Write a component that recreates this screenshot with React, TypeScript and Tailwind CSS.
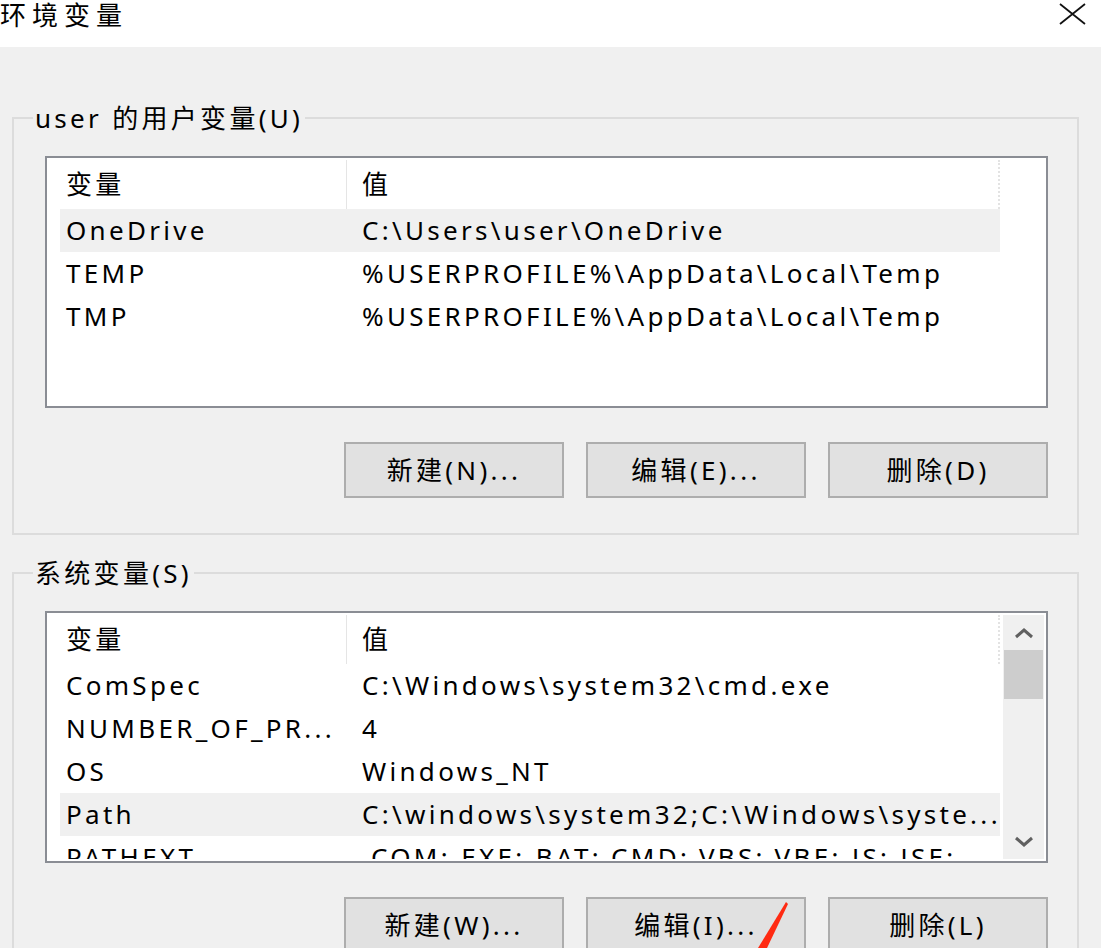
import React from "react";

type Row = { name: string; value: string; selected?: boolean };

const userRows: Row[] = [
  { name: "OneDrive", value: "C:\\Users\\user\\OneDrive", selected: true },
  { name: "TEMP", value: "%USERPROFILE%\\AppData\\Local\\Temp" },
  { name: "TMP", value: "%USERPROFILE%\\AppData\\Local\\Temp" },
];

const sysRows: Row[] = [
  { name: "ComSpec", value: "C:\\Windows\\system32\\cmd.exe" },
  { name: "NUMBER_OF_PR...", value: "4" },
  { name: "OS", value: "Windows_NT" },
  { name: "Path", value: "C:\\windows\\system32;C:\\Windows\\syste...", selected: true },
  { name: "PATHEXT", value: ".COM;.EXE;.BAT;.CMD;.VBS;.VBE;.JS;.JSE;" },
];

function ListBox({ rows, scroll }: { rows: Row[]; scroll?: boolean }) {
  return (
    <div className="w-[1003px] h-[252px] border-2 border-[#8a8d94] bg-white p-[2px] flex overflow-hidden">
      <div className="w-[951px] pl-[11px] flex flex-col overflow-hidden">
        <div className="h-[49px] flex shrink-0">
          <div className="w-[287px] h-full border-r border-[#e5e5e5] pl-[6px] flex items-center">变量</div>
          <div className="w-[653px] h-full border-r-2 border-dotted border-[#e3e3e3] pl-[15px] flex items-center">值</div>
        </div>
        {rows.map((r) => (
          <div
            key={r.name}
            className={`h-[43px] w-[940px] flex items-center shrink-0 ${r.selected ? "bg-[#f0f0f0]" : ""}`}
          >
            <div className="w-[287px] pl-[6px] whitespace-nowrap overflow-hidden">{r.name}</div>
            <div className="w-[653px] pl-[15px] whitespace-nowrap overflow-hidden">{r.value}</div>
          </div>
        ))}
      </div>
      {scroll && (
        <div className="ml-auto w-[41px] h-full bg-[#f0f0f0] flex flex-col items-center">
          <div className="h-[35px] w-full flex items-center justify-center">
            <svg width="20" height="12" viewBox="0 0 20 12">
              <path d="M2 10 L10 3 L18 10" fill="none" stroke="#606060" strokeWidth="3" />
            </svg>
          </div>
          <div className="w-[39px] h-[49px] bg-[#cdcdcd]" />
          <div className="flex-1" />
          <div className="h-[35px] w-full flex items-center justify-center">
            <svg width="20" height="12" viewBox="0 0 20 12">
              <path d="M2 2 L10 9 L18 2" fill="none" stroke="#606060" strokeWidth="3" />
            </svg>
          </div>
        </div>
      )}
    </div>
  );
}

function Btn({ label }: { label: string }) {
  return (
    <div className="w-[220px] h-[56px] border-2 border-[#adadad] bg-[#e1e1e1] flex items-center justify-center whitespace-nowrap">
      {label}
    </div>
  );
}

function Group({
  legend,
  rows,
  scroll,
  buttons,
  className,
}: {
  legend: string;
  rows: Row[];
  scroll?: boolean;
  buttons: string[];
  className: string;
}) {
  return (
    <fieldset className={`ml-[12px] w-[1067px] border-2 border-[#dcdcdc] p-0 m-0 ${className}`}>
      <legend className="ml-[19px] px-[2px] leading-[30px]">{legend}</legend>
      <div className="pl-[31px] pt-[23px] pb-[35px]">
        <ListBox rows={rows} scroll={scroll} />
        <div className="mt-[34px] w-[1003px] flex justify-end gap-[22px]">
          {buttons.map((b) => (
            <Btn key={b} label={b} />
          ))}
        </div>
      </div>
    </fieldset>
  );
}

export default function App() {
  return (
    <div
      className="relative w-[1101px] h-[948px] overflow-hidden bg-[#f0f0f0] text-black text-[26px] tracking-[3.3px]"
      style={{ fontFamily: '"Noto Sans", "Noto Sans CJK SC", sans-serif' }}
    >
      <div className="h-[47px] bg-white flex items-start justify-between">
        <div className="leading-[30px] tracking-[6px] whitespace-nowrap">环境变量</div>
        <svg className="mt-[3px] mr-[15px]" width="27" height="22" viewBox="0 0 27 22">
          <path d="M1 1 L26 21 M26 1 L1 21" stroke="#111" strokeWidth="1.8" fill="none" />
        </svg>
      </div>

      <Group
        className="mt-[56px]"
        legend="user 的用户变量(U)"
        rows={userRows}
        buttons={["新建(N)...", "编辑(E)...", "删除(D)"]}
      />
      <Group
        className="mt-[23px]"
        legend="系统变量(S)"
        rows={sysRows}
        scroll
        buttons={["新建(W)...", "编辑(I)...", "删除(L)"]}
      />

      <svg className="absolute left-0 top-0 pointer-events-none" width="1101" height="948" viewBox="0 0 1101 948">
        <polygon points="786,902 788,904 767,948 758,948" fill="#ff2a12" />
      </svg>
    </div>
  );
}
